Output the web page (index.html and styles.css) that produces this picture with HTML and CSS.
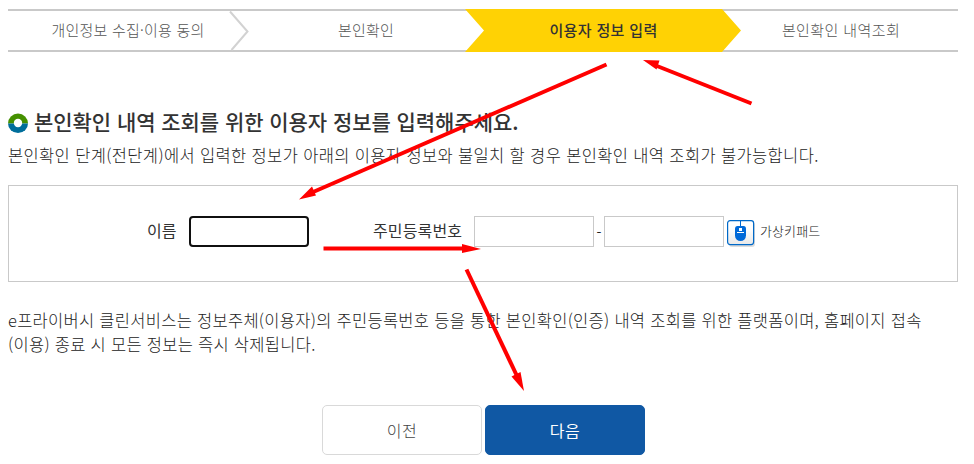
FILE: index.html
```html
<!DOCTYPE html>
<html lang="ko">
  <head>
    <meta charset="UTF-8" />
    <meta name="viewport" content="width=device-width, initial-scale=1.0" />
    <title>이용자 정보 입력</title>
    <link rel="stylesheet" href="styles.css">
  </head>
  <body>
    <!-- Steps -->
    <ol class="steps">
      <li class="step step-first">
        <span>개인정보 수집·이용 동의</span>
        <svg class="step-arrow" width="20" height="43" viewBox="0 0 20 43">
          <path d="M1 2.5L18.5 22.5L2.5 41" fill="none" stroke="#d2d2d2" stroke-width="2" />
        </svg>
      </li>
      <li class="step step-second"><span>본인확인</span></li>
      <li class="step step-active"><span>이용자 정보 입력</span></li>
      <li class="step step-last"><span>본인확인 내역조회</span></li>
    </ol>

    <h1 class="title">
      <svg class="title-icon" width="20" height="20" viewBox="0 0 20 20">
        <path d="M0 10.5A10 10 0 0 1 20 10.5Z" fill="#459000" />
        <path d="M0 10.5A10 9.5 0 0 0 20 10.5Z" fill="#006e9b" />
        <circle cx="10" cy="10" r="4.2" fill="#fff" />
      </svg>
      <span>본인확인 내역 조회를 위한 이용자 정보를 입력해주세요.</span>
    </h1>
    <p class="lead">본인확인 단계(전단계)에서 입력한 정보가 아래의 이용자 정보와 불일치 할 경우 본인확인 내역 조회가 불가능합니다.</p>

    <!-- User Info Form -->
    <form class="info-form" id="info-form">
      <label class="label-name" for="name">이름</label>
      <input class="field field-name" type="text" id="name" />
      <label class="label-number" for="number1">주민등록번호</label>
      <input class="field" type="text" id="number1" />
      <span class="dash">-</span>
      <input class="field" type="text" id="number2" />
      <svg class="mouse-icon" width="29" height="28" viewBox="0 0 29 28">
        <defs>
          <linearGradient id="key" x1="0" y1="0" x2="0" y2="1">
            <stop offset="0.3" stop-color="#fff" />
            <stop offset="1" stop-color="#e8e8e8" />
          </linearGradient>
        </defs>
        <rect x="2" y="2" width="26" height="25" rx="3" fill="#ddd" />
        <rect x="0.6" y="0.6" width="26" height="24" rx="2.5" fill="url(#key)" stroke="#0069c8" stroke-width="1.2" />
        <path d="M13.5 0V8" stroke="#0069d2" stroke-width="1" />
        <path d="M10.5 6H16.5Q19 6 19 9V15.5A5.5 5.5 0 0 1 8 15.5V9Q8 6 10.5 6Z" fill="#0069d8" />
        <path d="M12 8H15V11H12ZM10 12H17V13H10Z" fill="#fff" />
      </svg>
      <span class="keypad">가상키패드</span>
    </form>

    <p class="notice">e프라이버시 클린서비스는 정보주체(이용자)의 주민등록번호 등을 통한 본인확인(인증) 내역 조회를 위한 플랫폼이며, 홈페이지 접속<br />(이용) 종료 시 모든 정보는 즉시 삭제됩니다.</p>

    <div class="buttons">
      <button type="button" class="btn">이전</button>
      <button type="submit" form="info-form" class="btn btn-next">다음</button>
    </div>

    <!-- Guide arrows over the page -->
    <svg class="guide" width="974" height="464" viewBox="0 0 974 464">
      <g stroke="#f00" stroke-width="4">
        <path d="M606.500 64.500L312 192.500" />
        <path d="M751.500 103.500L657 66" />
        <path d="M323.500 248.500H464" />
        <path d="M466.500 269.500L517 376" />
      </g>
      <g fill="#f00">
        <path d="M299 199.500L312 186.500L316 195.500Z" />
        <path d="M643 60L659.500 60.500L656.500 69.500Z" />
        <path d="M481 249L462 244V253Z" />
        <path d="M524 391L511.500 376.500L520.500 372Z" />
      </g>
    </svg>
  </body>
</html>
```

FILE: styles.css
```css
/* Global Styles */
* {
  box-sizing: border-box;
}

body {
  margin: 0;
  padding: 9px 16px 0 8px;
  height: 464px;
  overflow: hidden;
  background: #fff;
  color: #222;
  font-family: "Noto Sans CJK KR", sans-serif;
  font-weight: 300;
  font-size: 16px;
}

/* Steps */
.steps {
  display: grid;
  grid-template-columns: 240px 217px 276px 217px;
  height: 43px;
  margin: 0;
  padding: 0;
  list-style: none;
  background:
    linear-gradient(#c9c9c9, #c9c9c9) top / 100% 2px no-repeat,
    linear-gradient(#c9c9c9, #c9c9c9) bottom / 100% 2px no-repeat;
}

.step {
  display: flex;
  align-items: center;
  justify-content: center;
  padding-bottom: 2px;
  color: #555;
  font-size: 15px;
  letter-spacing: 0.2px;
  white-space: nowrap;
}

.step-first {
  position: relative;
}

.step-arrow {
  position: absolute;
  top: 0;
  right: -1px;
}

.step-second {
  padding-left: 19px;
}

.step-active {
  padding-left: 1px;
  background: #ffd204;
  color: #333;
  font-weight: 500;
  letter-spacing: 0.35px;
  clip-path: polygon(0 0, 257px 0, 100% 50%, 257px 100%, 0 100%, 19px 50%);
}

.step-last {
  padding-right: 17px;
  letter-spacing: 0.4px;
}

/* Title */
.title {
  display: flex;
  align-items: center;
  gap: 6px;
  height: 30px;
  margin: 54px 0 0;
  color: #333;
  font-size: 21px;
  font-weight: 500;
  letter-spacing: -0.05px;
  white-space: nowrap;
}

.title-icon {
  margin-top: 3px;
}

.lead,
.notice {
  font-size: 16.5px;
  line-height: 24px;
  white-space: nowrap;
}

.lead {
  margin: 7px 0 0;
  letter-spacing: 0.36px;
}

/* Form Styling */
.info-form {
  display: flex;
  align-items: center;
  height: 97px;
  margin-top: 18px;
  padding: 0 0 4px 138px;
  border: 1px solid #c9c9c9;
}

.info-form label {
  padding-bottom: 3px;
  color: #333;
  font-weight: 400;
  white-space: nowrap;
}

.label-name {
  width: 42px;
}

.label-number {
  width: 101px;
  margin-left: 64px;
  letter-spacing: 0.15px;
}

.field {
  width: 120px;
  height: 31px;
  border: 1px solid #c9c9c9;
}

.field-name {
  border: 2px solid #101010;
  border-radius: 4px;
}

.dash {
  width: 10px;
  text-align: center;
  font-size: 14px;
  font-weight: 400;
}

.mouse-icon {
  margin: 4px 0 0 3px;
}

.keypad {
  margin-left: 4px;
  padding-bottom: 2px;
  font-size: 13px;
  letter-spacing: 0.1px;
}

.notice {
  margin: 26px 0 0;
  letter-spacing: 0.28px;
}

/* Buttons */
.buttons {
  display: flex;
  justify-content: center;
  gap: 3px;
  margin-top: 49px;
}

.btn {
  width: 160px;
  height: 50px;
  padding: 0 0 1px 1px;
  border: 1px solid #d9d9d9;
  border-radius: 5px;
  background: #fff;
  color: #444;
  font: inherit;
  letter-spacing: 0.5px;
}

.btn-next {
  border-color: #1058a4;
  background: #1058a4;
  color: #fff;
  font-weight: 400;
}

/* Arrows */
.guide {
  position: absolute;
  top: 0;
  left: 0;
  pointer-events: none;
}
```
